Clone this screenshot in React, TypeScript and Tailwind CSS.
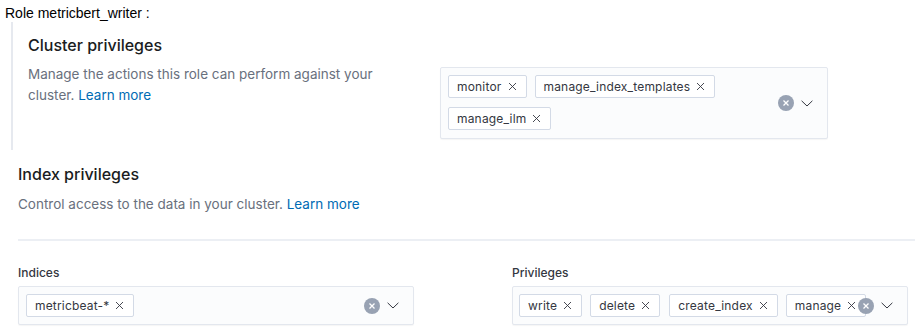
import React from "react";

const XSmall = () => (
  <svg width="9" height="9" viewBox="0 0 9 9" className="shrink-0">
    <path d="M1 1 L8 8 M8 1 L1 8" stroke="#343741" strokeWidth="0.9" fill="none" />
  </svg>
);

const ClearCircle = () => (
  <span className="flex h-[16px] w-[16px] items-center justify-center rounded-full bg-[#98a2b3]">
    <svg width="6" height="6" viewBox="0 0 6 6">
      <path d="M0.5 0.5 L5.5 5.5 M5.5 0.5 L0.5 5.5" stroke="#ffffff" strokeWidth="1.3" fill="none" />
    </svg>
  </span>
);

const Chevron = () => (
  <svg width="12" height="7" viewBox="0 0 12 7">
    <path d="M0.6 0.8 L6 6 L11.4 0.8" stroke="#343741" strokeWidth="1" fill="none" />
  </svg>
);

const Chip = ({ label, className = "" }: { label: string; className?: string }) => (
  <span
    className={
      "flex h-[23px] shrink-0 items-center gap-[6px] rounded-[2px] border border-[#d3dae6] bg-white pl-[8px] pr-[9px] text-[12px] tracking-[0.015em] text-[#343741] " +
      className
    }
  >
    <span>{label}</span>
    <XSmall />
  </span>
);

const Icons = () => (
  <div className="absolute right-[14px] top-1/2 flex -translate-y-1/2 items-center gap-[7px]">
    <ClearCircle />
    <Chevron />
  </div>
);

export default function App() {
  return (
    <div className="min-h-[335px] w-[915px] overflow-hidden bg-white" style={{ fontFamily: "Inter, 'Noto Sans', sans-serif" }}>
      <div
        className="pl-[5px] pt-[5px] text-[14px] leading-[16px] text-black"
        style={{ fontFamily: "'Liberation Sans', Arial, sans-serif" }}
      >
        Role metricbert_writer :
      </div>

      <div className="ml-[11px] mt-[1px] flex items-start border-l-2 border-[#e6e9ef] pb-[11px] pl-[15px] pt-[11px]">
        <div className="w-[412px]">
          <div className="text-[16px] font-medium leading-[24px] text-[#1a1c21]">Cluster privileges</div>
          <p className="mt-[7px] w-[370px] text-[13.5px] leading-[21px] text-[#69707d]">
            Manage the actions this role can perform against your cluster.{" "}
            <span className="text-[#006bb4]">Learn more</span>
          </p>
        </div>
        <div className="relative mt-[34px] h-[72px] w-[388px] rounded-[2px] border border-[#e3e7ee] bg-[#fbfcfd] pl-[7px] pt-[7px] shadow-[0_1px_1px_rgba(0,0,0,0.04)]">
          <div className="flex w-[320px] flex-wrap gap-x-[8px] gap-y-[9px]">
            <Chip label="monitor" />
            <Chip label="manage_index_templates" />
            <Chip label="manage_ilm" />
          </div>
          <Icons />
        </div>
      </div>

      <div className="pl-[18px]">
        <div className="mt-[12px] text-[16px] font-medium leading-[24px] text-[#1a1c21]">Index privileges</div>
        <p className="mt-[8px] text-[13.5px] leading-[21px] text-[#69707d]">
          Control access to the data in your cluster. <span className="text-[#006bb4]">Learn more</span>
        </p>
        <div className="mt-[24px] h-[2px] w-full bg-[#eceff4]" />

        <div className="mt-[23px] flex gap-[98px]">
          <div className="w-[396px]">
            <div className="text-[12px] font-medium leading-[18px] text-[#343741]">Indices</div>
            <div className="relative mt-[4px] flex h-[39px] items-center rounded-[2px] border border-[#e3e7ee] bg-[#fbfcfd] pl-[7px] shadow-[0_1px_1px_rgba(0,0,0,0.04)]">
              <Chip label="metricbeat-*" />
              <Icons />
            </div>
          </div>
          <div className="w-[396px]">
            <div className="text-[12px] font-medium leading-[18px] text-[#343741]">Privileges</div>
            <div className="relative mt-[4px] flex h-[39px] items-center overflow-hidden rounded-[2px] border border-[#e3e7ee] bg-[#fbfcfd] pl-[6px] shadow-[0_1px_1px_rgba(0,0,0,0.04)]">
              <div className="flex flex-nowrap gap-[8px]">
                <Chip label="write" />
                <Chip label="delete" />
                <Chip label="create_index" className="ml-[1px]" />
                <Chip label="manage" />
              </div>
              <Icons />
            </div>
          </div>
        </div>
      </div>
    </div>
  );
}
